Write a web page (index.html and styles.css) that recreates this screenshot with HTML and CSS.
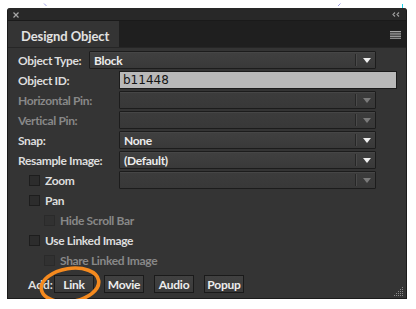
FILE: index.html
```html
<!DOCTYPE html>
<html>
<head>
<meta charset="utf-8">
<link rel="stylesheet" href="styles.css">
</head>
<body>
<svg class="marks" width="416" height="309" viewBox="0 0 416 309">
  <path d="M44 3.5 L46.5 6" stroke="#8a8ae0" stroke-width="0.8"/>
  <path d="M338 6 L340.5 3.5" stroke="#8a8ae0" stroke-width="0.8"/>
  <path d="M42 306 L44.5 303.5" stroke="#8a8ae0" stroke-width="0.8"/>
  <path d="M340 303.5 L342.5 306" stroke="#8a8ae0" stroke-width="0.8"/>
  <path d="M402.5 4 V8 M402.5 302 V309" stroke="#20d0e8" stroke-width="1"/>
</svg>
<div class="panel">
  <div class="titlebar">
    <svg class="close" width="6" height="6" viewBox="0 0 6 6"><path d="M0.5 0.5 L5.5 5.5 M5.5 0.5 L0.5 5.5" stroke="#a8a8a8" stroke-width="1.2"/></svg>
    <svg class="collapse" width="8" height="5" viewBox="0 0 8 5"><path d="M3 0.5 L1 2.5 L3 4.5 M7 0.5 L5 2.5 L7 4.5" stroke="#a0a0a0" stroke-width="1.1" fill="none"/></svg>
  </div>
  <div class="tabs">
    <div class="tab">Designd Object</div>
    <svg class="menu" width="11" height="8" viewBox="0 0 11 8"><path d="M0 0.5 H11 M0 2.2 H11 M0 3.9 H11 M0 5.6 H11 M0 7.3 H11" stroke="#b4b4b4" stroke-width="0.9"/></svg>
  </div>
  <div class="content">
    <div class="row">
      <div class="label short">Object Type:</div>
      <div class="select wide"><span class="val">Block</span><span class="sep"></span><span class="arrow"></span></div>
    </div>
    <div class="row">
      <div class="label">Object ID:</div>
      <div class="input">b11448</div>
    </div>
    <div class="row">
      <div class="label off">Horizontal Pin:</div>
      <div class="select disabled"><span class="val"></span><span class="sep"></span><span class="arrow"></span></div>
    </div>
    <div class="row">
      <div class="label off">Vertical Pin:</div>
      <div class="select disabled"><span class="val"></span><span class="sep"></span><span class="arrow"></span></div>
    </div>
    <div class="row">
      <div class="label">Snap:</div>
      <div class="select"><span class="val">None</span><span class="sep"></span><span class="arrow"></span></div>
    </div>
    <div class="row">
      <div class="label">Resample Image:</div>
      <div class="select"><span class="val">(Default)</span><span class="sep"></span><span class="arrow"></span></div>
    </div>
    <div class="row">
      <div class="label"><span class="check"></span>Zoom</div>
      <div class="select disabled"><span class="val"></span><span class="sep"></span><span class="arrow"></span></div>
    </div>
    <div class="row">
      <div class="label"><span class="check"></span>Pan</div>
    </div>
    <div class="row">
      <div class="label off sub"><span class="check"></span>Hide Scroll Bar</div>
    </div>
    <div class="row">
      <div class="label wide-label"><span class="check"></span>Use Linked Image</div>
    </div>
    <div class="row">
      <div class="label off sub wide-label"><span class="check"></span>Share Linked Image</div>
    </div>
    <div class="row add-row">
      <div class="add-label">Add:</div>
      <div class="btn">Link</div>
      <div class="btn">Movie</div>
      <div class="btn">Audio</div>
      <div class="btn">Popup</div>
    </div>
  </div>
  <svg class="grip" width="11" height="10" viewBox="0 0 11 10">
    <g fill="#8a8a8a">
      <rect x="8" y="0" width="1" height="1"/>
      <rect x="6" y="2" width="1" height="1"/><rect x="8" y="2" width="1" height="1"/>
      <rect x="4" y="4" width="1" height="1"/><rect x="6" y="4" width="1" height="1"/><rect x="8" y="4" width="1" height="1"/>
      <rect x="2" y="6" width="1" height="1"/><rect x="4" y="6" width="1" height="1"/><rect x="6" y="6" width="1" height="1"/><rect x="8" y="6" width="1" height="1"/>
      <rect x="0" y="8" width="1" height="1"/><rect x="2" y="8" width="1" height="1"/><rect x="4" y="8" width="1" height="1"/><rect x="6" y="8" width="1" height="1"/><rect x="8" y="8" width="1" height="1"/>
    </g>
  </svg>
  <svg class="highlight" width="84" height="50" viewBox="0 0 84 50">
    <ellipse cx="39" cy="24" rx="29" ry="16.5" transform="rotate(-9 39 24)" fill="none" stroke="#f58a1f" stroke-width="3.6"/>
  </svg>
</div>
</body>
</html>
```

FILE: styles.css
```css
html, body {
  margin: 0;
  padding: 0;
  background: #ffffff;
}

body {
  font-family: Lato, "Liberation Sans", Arial, sans-serif;
  position: relative;
}

.marks {
  position: absolute;
  left: 0;
  top: 0;
}

.panel {
  position: relative;
  margin: 8px 0 0 7px;
  width: 400px;
  height: 291px;
  box-sizing: border-box;
  background: #343434;
  border: 1px solid #1b1b1b;
  border-top: none;
  border-radius: 3px 3px 0 0;
}

.titlebar {
  height: 13px;
  box-sizing: border-box;
  background: #282828;
  border-bottom: 1px solid #1a1a1a;
  border-radius: 3px 3px 0 0;
  display: flex;
  align-items: center;
  justify-content: space-between;
  padding: 1px 6px 0 5px;
}

.close {
  display: block;
}

.collapse {
  display: block;
}

.tabs {
  height: 27px;
  background: #1f1f1f;
  display: flex;
  align-items: stretch;
  justify-content: space-between;
  border-bottom: 1px solid #262626;
  box-sizing: border-box;
}

.tab {
  width: 111px;
  background: #343434;
  color: #e2e2e2;
  font-weight: bold;
  font-size: 13px;
  letter-spacing: -0.1px;
  white-space: nowrap;
  display: flex;
  align-items: center;
  padding: 3px 0 0 13px;
  box-sizing: border-box;
}

.menu {
  align-self: center;
  margin-right: 5px;
  margin-top: 2px;
}

.content {
  padding: 2px 0 0 10px;
}

.row {
  display: flex;
  align-items: center;
  height: 20px;
}

.label {
  width: 101px;
  flex: none;
  font-size: 12px;
  font-weight: bold;
  letter-spacing: -0.35px;
  color: #dddddd;
  display: flex;
  align-items: center;
  white-space: nowrap;
}

.label.short {
  width: 71px;
}

.label.off {
  color: #888888;
}

.label.wide-label {
  width: 200px;
}

.check {
  width: 11px;
  height: 11px;
  box-sizing: border-box;
  border: 1px solid #1d1d1d;
  background: #2c2c2c;
  margin: 0 5px 0 11px;
  flex: none;
}

.label.sub .check {
  margin-left: 26px;
  border-color: #2a2a2a;
  background: #313131;
}

.select {
  width: 257px;
  height: 18px;
  box-sizing: border-box;
  border: 1px solid #1c1c1c;
  border-radius: 1px;
  background: linear-gradient(#404040, #393939);
  box-shadow: inset 0 1px 0 #464646;
  display: flex;
  align-items: center;
}

.select.wide {
  width: 287px;
}

.select .val {
  flex: 1;
  padding-left: 4px;
  font-size: 12px;
  font-weight: bold;
  letter-spacing: -0.3px;
  color: #ececec;
}

.select .sep {
  width: 1px;
  height: 12px;
  background: #262626;
  border-right: 1px solid #4a4a4a;
}

.select .arrow {
  width: 0;
  height: 0;
  border-left: 4px solid transparent;
  border-right: 4px solid transparent;
  border-top: 5px solid #f0f0f0;
  margin: 1px 4px 0 6px;
}

.select.disabled {
  background: linear-gradient(#3c3c3c, #383838);
}

.select.disabled .arrow {
  border-top-color: #7a7a7a;
}

.input {
  width: 278px;
  height: 18px;
  box-sizing: border-box;
  border: 1px solid #1b1b1b;
  background: #b9b9b9;
  color: #151515;
  font-family: "DejaVu Sans", sans-serif;
  font-size: 12px;
  line-height: 16px;
  padding-left: 3px;
}

.add-row {
  margin-top: 3px;
  height: 22px;
}

.add-label {
  font-size: 12px;
  font-weight: bold;
  color: #dddddd;
  margin-left: 10px;
  width: 26px;
  flex: none;
}

.btn {
  width: 40px;
  height: 18px;
  box-sizing: border-box;
  border: 1px solid #1a1a1a;
  background: linear-gradient(#414141, #3a3a3a);
  color: #ececec;
  font-size: 12px;
  font-weight: bold;
  letter-spacing: -0.2px;
  display: flex;
  align-items: center;
  justify-content: center;
  margin-right: 10px;
  flex: none;
}

.grip {
  position: absolute;
  right: 1px;
  bottom: 1px;
}

.highlight {
  position: absolute;
  left: 23px;
  top: 253px;
}
```
